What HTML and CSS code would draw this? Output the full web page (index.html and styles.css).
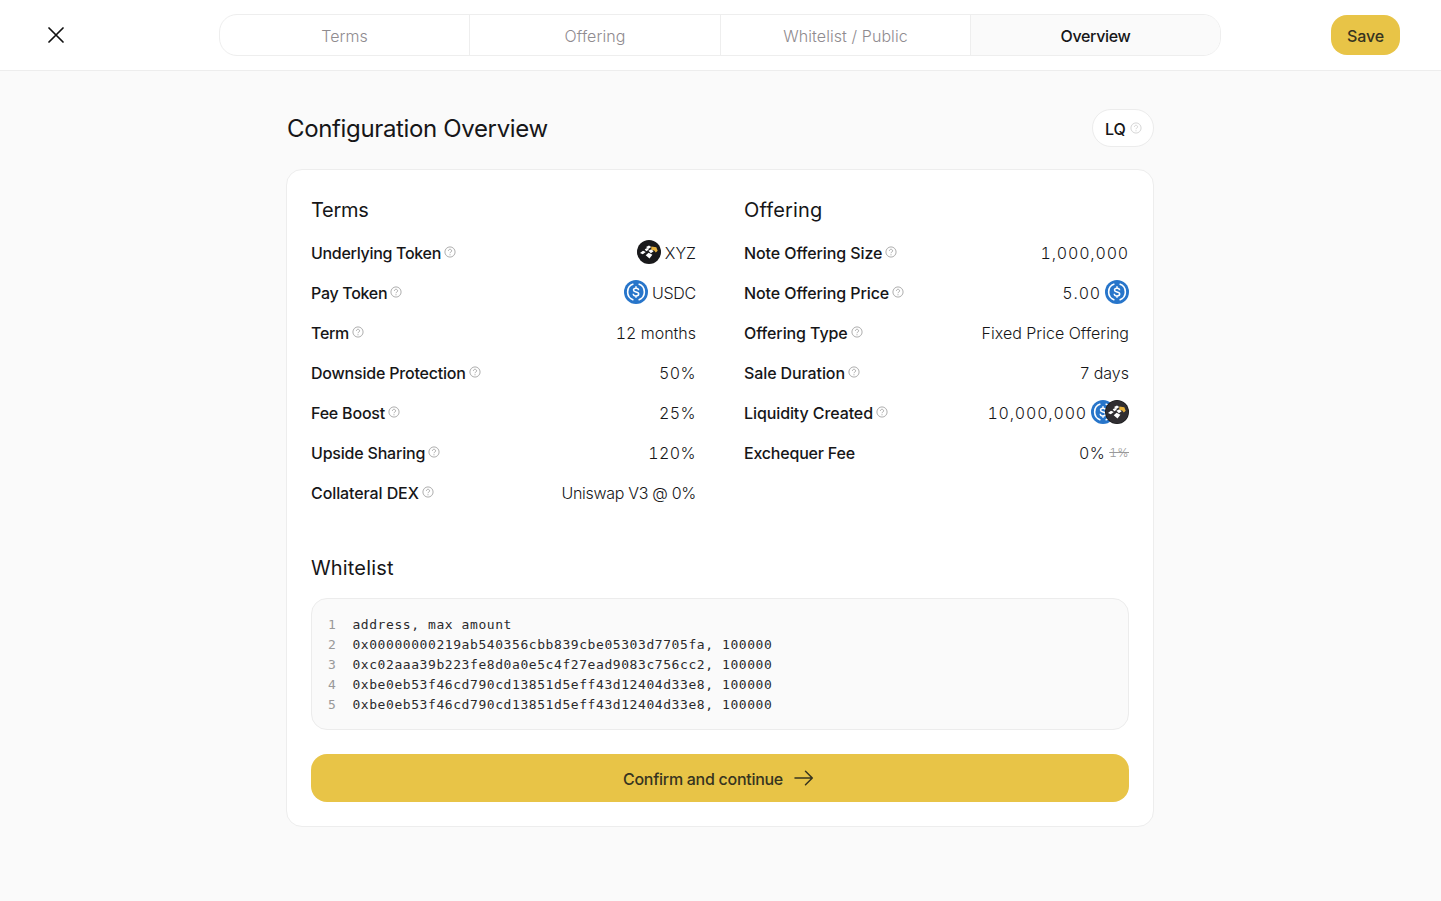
FILE: index.html
```html
<!DOCTYPE html>
<html lang="en">
<head>
<meta charset="utf-8">
<title>Configuration Overview</title>
<link rel="stylesheet" href="styles.css">
</head>
<body>
<svg class="defs" width="0" height="0">
  <symbol id="help" viewBox="0 0 12 12">
    <circle cx="6" cy="6" r="5.1" fill="none" stroke="currentColor" stroke-width=".8"/>
    <path d="M4.400 4.800a1.600 1.500 0 1 1 2.500 1.200c-.6.4-.9.6-.9 1.200" fill="none" stroke="currentColor" stroke-width=".8"/>
    <circle cx="6" cy="8.700" r=".55" fill="currentColor"/>
  </symbol>
  <symbol id="usdc" viewBox="0 0 24 24">
    <circle cx="12" cy="12" r="12" fill="#2775ca"/>
    <path d="M9.4 4.1a8.3 8.3 0 0 0 0 15.8M14.6 4.1a8.3 8.3 0 0 1 0 15.8" fill="none" stroke="#fff" stroke-width="1.6"/>
    <path d="M14.6 10.2c-.1-1.3-1.1-2-2.6-2s-2.5.7-2.5 1.8c0 2.7 5.2 1.2 5.2 4 0 1.200-1.100 1.900-2.700 1.900s-2.700-.8-2.800-2.200M12 6.300v1.900M12 15.900v1.900" fill="none" stroke="#fff" stroke-width="1.500"/>
  </symbol>
  <symbol id="xyz" viewBox="0 0 24 24">
    <circle cx="12" cy="12" r="12" fill="#19191b"/>
    <path d="M9 7l3-1.600 2.200 1.700-2.700 2zM3 12.900l3-2.100 2.800 1.300-3 2.200zM7.700 9.200l2.500-1.200 1.600 1.700-2.600 1.500zM11.400 10.700l3-1.500 2.200 2-2.700 2zM8.700 15.200l2.900-2.400 3.800 2-2.900 3.600z" fill="#fff"/>
    <path d="M14.300 6.600l5 .6 1.400 3.600-1.900 1.800-1.600-2.200-2.900-.7z" fill="#e6b13c"/>
  </symbol>
  <symbol id="xyz-soft" viewBox="0 0 24 24">
    <circle cx="12" cy="12" r="12" fill="#19191b"/>
    <circle cx="12" cy="12" r="11.200" fill="#302e31"/>
    <path d="M9 7l3-1.600 2.200 1.700-2.700 2zM3 12.900l3-2.100 2.800 1.300-3 2.200zM7.700 9.200l2.500-1.200 1.600 1.700-2.600 1.500zM11.400 10.700l3-1.500 2.200 2-2.700 2zM8.700 15.200l2.900-2.400 3.800 2-2.900 3.600z" fill="#fff"/>
    <path d="M14.300 6.600l5 .6 1.400 3.600-1.900 1.800-1.600-2.200-2.900-.7z" fill="#e6b13c"/>
  </symbol>
</svg>
<header class="topbar">
  <svg class="close" viewBox="0 0 16 16"><path d="M1 1l14 14M15 1L1 15"/></svg>
  <nav class="steps">
    <a class="step">Terms</a><a class="step">Offering</a><a class="step">Whitelist / Public</a><a class="step active">Overview</a>
  </nav>
  <button class="save">Save</button>
</header>
<main class="page">
  <div class="heading">
    <h1>Configuration Overview</h1>
    <span class="chip">LQ<svg class="help"><use href="#help"/></svg></span>
  </div>
  <section class="card">
    <div class="columns">
      <div class="col">
        <h2 class="terms">Terms</h2>
        <div class="row"><span class="label tight">Underlying Token<svg class="help"><use href="#help"/></svg></span><span class="value"><svg class="token"><use href="#xyz"/></svg>XYZ</span></div>
        <div class="row"><span class="label tight">Pay Token<svg class="help"><use href="#help"/></svg></span><span class="value ticker"><svg class="token"><use href="#usdc"/></svg>USDC</span></div>
        <div class="row"><span class="label tight">Term<svg class="help"><use href="#help"/></svg></span><span class="value months">12 months</span></div>
        <div class="row"><span class="label snug">Downside Protection<svg class="help"><use href="#help"/></svg></span><span class="value num">50%</span></div>
        <div class="row"><span class="label snug">Fee Boost<svg class="help"><use href="#help"/></svg></span><span class="value num">25%</span></div>
        <div class="row"><span class="label snug">Upside Sharing<svg class="help"><use href="#help"/></svg></span><span class="value num">120%</span></div>
        <div class="row"><span class="label">Collateral DEX<svg class="help"><use href="#help"/></svg></span><span class="value dex">Uniswap V3 @ 0%</span></div>
      </div>
      <div class="col">
        <h2 class="wide">Offering</h2>
        <div class="row"><span class="label">Note Offering Size<svg class="help"><use href="#help"/></svg></span><span class="value amount">1,000,000</span></div>
        <div class="row"><span class="label">Note Offering Price<svg class="help"><use href="#help"/></svg></span><span class="value amount">5.00<svg class="token"><use href="#usdc"/></svg></span></div>
        <div class="row"><span class="label">Offering Type<svg class="help"><use href="#help"/></svg></span><span class="value">Fixed Price Offering</span></div>
        <div class="row"><span class="label">Sale Duration<svg class="help"><use href="#help"/></svg></span><span class="value">7 days</span></div>
        <div class="row"><span class="label">Liquidity Created<svg class="help"><use href="#help"/></svg></span><span class="value amount">10,000,000<span class="pair"><svg class="token"><use href="#usdc"/></svg><svg class="token"><use href="#xyz-soft"/></svg></span></span></div>
        <div class="row"><span class="label snug">Exchequer Fee</span><span class="value num">0%<s>1%</s></span></div>
      </div>
    </div>
    <h2 class="wl-title wide">Whitelist</h2>
    <ol class="code">
      <li><i>1</i><code>address, max amount</code></li>
      <li><i>2</i><code>0x00000000219ab540356cbb839cbe05303d7705fa, 100000</code></li>
      <li><i>3</i><code>0xc02aaa39b223fe8d0a0e5c4f27ead9083c756cc2, 100000</code></li>
      <li><i>4</i><code>0xbe0eb53f46cd790cd13851d5eff43d12404d33e8, 100000</code></li>
      <li><i>5</i><code>0xbe0eb53f46cd790cd13851d5eff43d12404d33e8, 100000</code></li>
    </ol>
    <button class="confirm">Confirm and continue<svg class="arrow" viewBox="0 0 20 16"><path d="M1 8h17M11.500 1.200L18.300 8l-6.800 6.800"/></svg></button>
  </section>
</main>
</body>
</html>
```

FILE: styles.css
```css
* { box-sizing: border-box; }
body {
  margin: 0;
  min-height: 901px;
  background: #fafafa;
  color: #161618;
  font: 480 16px/24px Inter, "Liberation Sans", sans-serif;
}
h1, h2 { margin: 0; font-weight: 440; }
button { border: 0; padding: 0; font: inherit; color: #37341f; background: #e8c447; }
.defs { display: block; }
.topbar {
  display: flex;
  align-items: center;
  height: 71px;
  padding: 0 41px 0 48px;
  background: #fff;
  border-bottom: 1px solid #ededed;
}
.close { width: 16px; height: 16px; fill: none; stroke: #111; stroke-width: 1.7; stroke-linecap: round; }
.steps { display: grid; grid-template-columns: 250px 251px 250px 249px; width: 1002px; height: 42px; margin: 0 auto 0 155px; border: 1px solid #eee; border-radius: 18px; overflow: hidden; }
.step { display: flex; align-items: center; justify-content: center; padding-top: 1px; color: #8f8b8f; font-weight: 350; letter-spacing: .08px; border-right: 1px solid #eee; }
.step.active { color: #161618; background: #fafafa; font-weight: 480; letter-spacing: -.35px; border-right: 0; }
.save { width: 69px; height: 40px; border-radius: 16px; padding-top: 1px; letter-spacing: -.1px; }
.page { width: 868px; margin: 38px 0 0 286px; }
.heading { display: flex; align-items: center; justify-content: space-between; height: 38px; }
h1 { padding: 2px 0 0 1px; font-size: 24px; line-height: 32px; letter-spacing: -.35px; }
.chip { display: flex; align-items: center; gap: 4px; width: 62px; height: 38px; padding: 1px 0 0 12px; background: #fff; border: 1px solid #ececec; border-radius: 19px; }
.help { flex: none; width: 12px; height: 12px; color: #999; }
.chip .help { color: #ccc; margin-top: -1px; }
.card { height: 658px; margin-top: 22px; padding: 25px 24px 0; background: #fff; border: 1px solid #ededed; border-radius: 16px; }
.columns { display: grid; grid-template-columns: 385px 385px; gap: 48px; height: 327px; }
h2 { font-size: 20px; line-height: 30px; margin-bottom: 8px; }
.terms { letter-spacing: -.3px; }
.row { display: flex; align-items: center; justify-content: space-between; height: 40px; }
.label, .value { display: flex; align-items: center; }
.label { gap: 3px; letter-spacing: -.1px; }
.label.tight { letter-spacing: -.3px; }
.label.snug { letter-spacing: -.2px; }
.label .help { margin-top: -2px; }
.wide { letter-spacing: .16px; }
.value { gap: 4px; font-weight: 320; }
.num { letter-spacing: .4px; font-variant-numeric: tabular-nums; }
.amount { letter-spacing: .82px; font-variant-numeric: tabular-nums; }
.months { letter-spacing: 0; font-variant-numeric: tabular-nums; }
.ticker { letter-spacing: -.25px; }
.dex { letter-spacing: -.3px; }
.token { flex: none; width: 24px; height: 24px; margin: -2px 0 0; }
.pair { display: flex; }
.pair .token + .token { margin-left: -10px; }
s { font-size: 12px; letter-spacing: .4px; color: #999; }
.wl-title { margin: 31px 0 15px; }
.code { height: 132px; margin: 0 0 24px; padding: 16px; list-style: none; background: #fafafa; border: 1px solid #ececec; border-radius: 16px; }
.code li { display: flex; gap: 16px; height: 20px; color: #2a2a2c; font: 400 13px/19px "DejaVu Sans Mono", "Liberation Mono", monospace; letter-spacing: .574px; }
.code i { width: 8.4px; font-style: normal; color: #999; }
.code code { font: inherit; }
.confirm { display: flex; align-items: center; justify-content: center; gap: 11px; width: 100%; height: 48px; padding: 1px 3px 0 0; border-radius: 16px; letter-spacing: -.28px; }
.arrow { width: 20px; height: 16px; margin-top: -1px; fill: none; stroke: #37341f; stroke-width: 1.5; stroke-linecap: round; stroke-linejoin: round; }
```
